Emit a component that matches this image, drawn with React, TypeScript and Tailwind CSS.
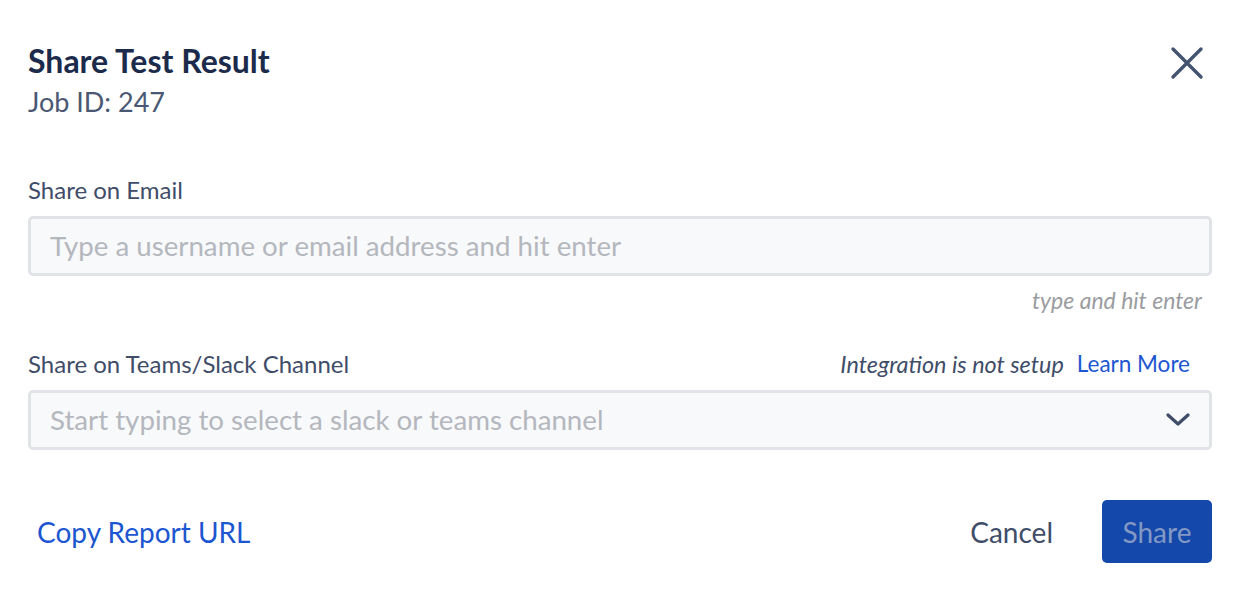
export default function App() {
  return (
    <div className="min-h-screen bg-white font-['Lato','Liberation_Sans',sans-serif] pl-[28px] pr-[34px] pt-[41px]">
      <div className="flex items-start justify-between">
        <div>
          <h1 className="text-[32px] leading-[40px] font-bold text-[#1c2b4b]">Share Test Result</h1>
          <p className="mt-[5px] text-[27px] leading-[32px] text-[#4a5873]">Job ID: 247</p>
        </div>
        <button className="mt-[5px] mr-[8px] text-[#44536f]">
          <svg width="34" height="34" viewBox="0 0 34 34" fill="none" stroke="currentColor" strokeWidth="3.4" strokeLinecap="round">
            <path d="M3 3L31 31M31 3L3 31" />
          </svg>
        </button>
      </div>

      <label className="block mt-[58px] text-[24px] leading-[28px] text-[#3f4d69]">Share on Email</label>
      <div className="mt-[12px] h-[60px] rounded-[5px] border-[3px] border-[#e1e3e8] bg-[#f8f9fb] flex items-center px-[19px]">
        <span className="text-[27.7px] text-[#b4b7bd]">Type a username or email address and hit enter</span>
      </div>
      <p className="mt-[10px] pr-[10px] text-right text-[23px] leading-[28px] italic text-[#9a9ca1]">type and hit enter</p>

      <div className="mt-[36px] flex items-center justify-between pr-[22px] leading-[28px]">
        <span className="text-[24px] text-[#3f4d69]">Share on Teams/Slack Channel</span>
        <span className="flex items-center gap-[13px]">
          <span className="text-[23.4px] italic text-[#3f4d69]">Integration is not setup</span>
          <a className="text-[22.5px] text-[#1c56d0]">Learn More</a>
        </span>
      </div>
      <div className="mt-[12px] h-[60px] rounded-[5px] border-[3px] border-[#e1e3e8] bg-[#f8f9fb] flex items-center justify-between pl-[19px] pr-[19px]">
        <span className="text-[27.7px] text-[#b4b7bd]">Start typing to select a slack or teams channel</span>
        <svg width="24" height="14" viewBox="0 0 24 14" fill="none" stroke="#3f4d69" strokeWidth="3.2" strokeLinecap="round" strokeLinejoin="round">
          <path d="M2 2L12 11L22 2" />
        </svg>
      </div>

      <div className="mt-[50px] flex items-center justify-between">
        <a className="ml-[9px] text-[28px] text-[#1c56d0]">Copy Report URL</a>
        <div className="flex items-center gap-[49px]">
          <button className="text-[28px] text-[#3f4d69]">Cancel</button>
          <button className="h-[63px] w-[110px] rounded-[5px] bg-[#1448aa] text-[28px] text-[#8398c4]">Share</button>
        </div>
      </div>
    </div>
  );
}
